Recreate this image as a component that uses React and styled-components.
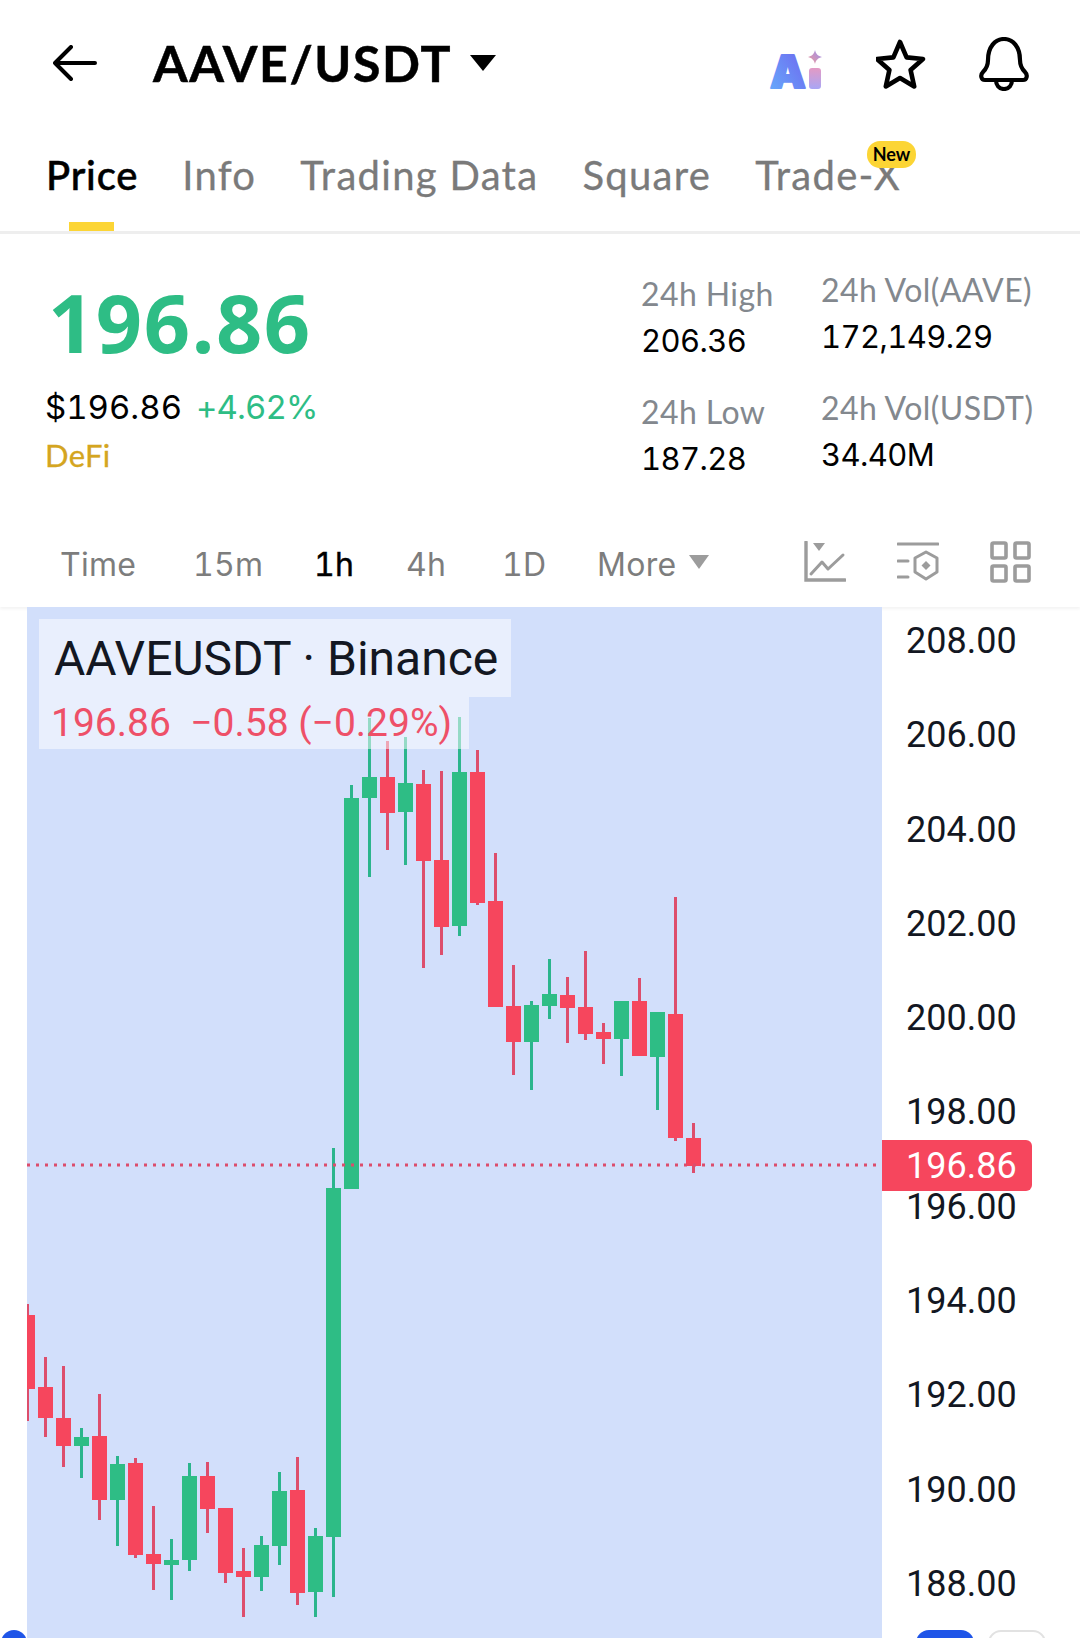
import React from "react";
import styled, { createGlobalStyle } from "styled-components";

const GlobalStyle = createGlobalStyle`
  html, body { margin: 0; padding: 0; background: #fff; }
  * { box-sizing: border-box; }
`;

const UI_FONT = `Lato, "Open Sans", sans-serif`;
const NUM_FONT = `Inter, "Open Sans", sans-serif`;

// ---------- page ----------
const Page = styled.div`
  width: 1080px;
  height: 1638px;
  overflow: hidden;
  background: #fff;
  font-family: ${UI_FONT};
  color: #000;
`;

// ---------- top bar ----------
const TopBar = styled.div`
  height: 125px;
  padding: 39px 51px 0 53px;
  display: flex;
  align-items: flex-start;
`;

const BackButton = styled.div`
  width: 44px;
  height: 44px;
  margin-top: 6px;
  margin-right: 56px;
`;

const Title = styled.div`
  font-size: 50px;
  font-weight: 700;
  line-height: 50px;
  margin-top: -1px;
  letter-spacing: 1.6px;
  -webkit-text-stroke: 0.5px #000;
`;

const Caret = styled.div`
  width: 0;
  height: 0;
  margin-left: ${p => p.$left}px;
  margin-top: ${p => p.$top || 0}px;
  border-left: ${p => p.$size}px solid transparent;
  border-right: ${p => p.$size}px solid transparent;
  border-top: ${p => p.$h}px solid ${p => p.$color};
`;

const IconGroup = styled.div`
  margin-left: auto;
  display: flex;
  align-items: flex-start;
  gap: 53px;
`;

// ---------- tabs ----------
const Tabs = styled.div`
  height: 109px;
  padding: 26px 0 0 46px;
  display: flex;
  gap: 44px;
  border-bottom: 3px solid #eeeeee;
`;

const Tab = styled.div`
  position: relative;
  height: 80px;
  font-size: 40px;
  line-height: 48px;
  letter-spacing: ${p => (p.$active ? 0.8 : 1.3)}px;
  font-weight: ${p => (p.$active ? 500 : 400)};
  color: ${p => (p.$active ? "#000" : "#7a7a7a")};
  -webkit-text-stroke: ${p => (p.$active ? "0.5px #000" : "0.3px #7a7a7a")};
  ${p =>
    p.$active &&
    `&::after {
      content: "";
      position: absolute;
      left: 23px;
      bottom: 0;
      width: 45px;
      height: 9px;
      background: #fcd535;
    }`}
`;

const NewBadge = styled.span`
  position: absolute;
  right: -15px;
  top: -10px;
  width: 49px;
  height: 27px;
  border-radius: 13px;
  background: #fcd535;
  color: #000;
  font-size: 18px;
  line-height: 27px;
  letter-spacing: 0;
  font-weight: 700;
  text-align: center;
  -webkit-text-stroke: 0;
`;

// ---------- stats ----------
const Stats = styled.div`
  height: 307px;
  padding-left: 45px;
  display: flex;
`;

const PriceBlock = styled.div`
  width: 596px;
  padding-top: 47px;
`;

const BigPrice = styled.div`
  font-family: "Open Sans", sans-serif;
  font-size: 81px;
  line-height: 81px;
  font-weight: 700;
  letter-spacing: 1.5px;
  color: #2ebd85;
  margin-left: 3px;
`;

const PriceRow = styled.div`
  display: flex;
  gap: 14px;
  margin-top: 25px;
  font-family: ${NUM_FONT};
  font-variant-numeric: tabular-nums;
  font-size: 33px;
  line-height: 40px;
`;

const Fiat = styled.span`
  color: #000;
`;

const Change = styled.span`
  color: #2ebd85;
  letter-spacing: -0.9px;
`;

const Sector = styled.div`
  margin-top: 9px;
  font-size: 31px;
  line-height: 38px;
  letter-spacing: 0.3px;
  color: #d4a520;
  -webkit-text-stroke: 0.3px #d4a520;
`;

const StatColumn = styled.div`
  width: ${p => p.$width}px;
  padding-top: ${p => p.$top}px;
  display: flex;
  flex-direction: column;
  gap: 34px;
`;

const StatItem = styled.div`
  display: flex;
  flex-direction: column;
  gap: 10px;
`;

const StatLabel = styled.div`
  font-size: 32px;
  line-height: 37px;
  letter-spacing: 0.4px;
  color: #83888e;
`;

const StatValue = styled.div`
  font-family: ${NUM_FONT};
  font-variant-numeric: tabular-nums;
  font-size: 31px;
  line-height: 37px;
  letter-spacing: -0.6px;
  color: #000;
`;

// ---------- interval bar ----------
const IntervalBar = styled.div`
  height: 66px;
  position: relative;
  display: flex;
  align-items: flex-start;
  padding-left: 60px;
  box-shadow: 0 2px 3px rgba(0, 0, 0, 0.05);
`;

const Interval = styled.div`
  width: ${p => p.$width}px;
  font-family: ${NUM_FONT};
  font-variant-numeric: tabular-nums;
  font-size: 32px;
  line-height: 40px;
  letter-spacing: 0.3px;
  margin-top: 4px;
  color: ${p => (p.$active ? "#000" : "#7d7d7d")};
  -webkit-text-stroke: ${p => (p.$active ? "0.4px #000" : "0")};
`;

const ToolIcons = styled.div`
  margin-left: auto;
  margin-right: 49px;
  display: flex;
  gap: 51px;
`;

// ---------- chart ----------
const ChartRow = styled.div`
  display: flex;
  height: 1031px;
`;

const Gutter = styled.div`
  width: 27px;
  flex: none;
  display: flex;
  align-items: flex-end;
`;

const BlueDot = styled.div`
  width: 26px;
  height: 26px;
  flex: none;
  margin-left: 1px;
  margin-bottom: -18px;
  border-radius: 50%;
  background: #1f55e8;
`;

const Plot = styled.div`
  position: relative;
  width: 855px;
  flex: none;
  background: #d2dffb;
  overflow: hidden;
`;

const PlotSvg = styled.svg`
  display: block;
  width: 855px;
  height: 1031px;
`;

const Legend = styled.div`
  position: absolute;
  left: 12px;
  top: 12px;
  display: flex;
  flex-direction: column;
  align-items: flex-start;
  font-family: Roboto, sans-serif;
`;

const LegendTitle = styled.div`
  height: 78px;
  width: 472px;
  padding: 1px 0 0 15px;
  background: rgba(255, 255, 255, 0.5);
  font-size: 48px;
  line-height: 78px;
  color: #131722;
  white-space: nowrap;
`;

const LegendValues = styled.div`
  height: 52px;
  width: 430px;
  padding-left: 12px;
  background: rgba(255, 255, 255, 0.5);
  font-size: 39px;
  line-height: 52px;
  color: #ee5068;
  white-space: pre;
`;

const Axis = styled.div`
  position: relative;
  flex: 1;
  padding: 14px 0 0 24px;
  font-family: Roboto, sans-serif;
  font-size: 36px;
  color: #131722;
  display: flex;
  flex-direction: column;
`;

const AxisLabel = styled.div`
  height: 40px;
  line-height: 40px;
  margin-bottom: 54.3px;
`;

const PriceTag = styled.div`
  position: absolute;
  left: 0;
  top: 533px;
  width: 150px;
  height: 51px;
  padding-left: 24px;
  background: #f6465d;
  border-radius: 0 6px 6px 0;
  color: #fff;
  line-height: 53px;
`;

const ToggleRow = styled.div`
  display: flex;
  gap: 14px;
  margin: -28.3px 0 0 10px;
`;

const Toggle = styled.div`
  width: 58px;
  height: 30px;
  border-radius: 13px;
  background: ${p => (p.$on ? "#1f55e8" : "#fff")};
  border: ${p => (p.$on ? "none" : "2px solid #e2e2e2")};
`;

// ---------- data ----------
const TABS = ["Price", "Info", "Trading Data", "Square"];

const INTERVALS = [
  { label: "Time", width: 133 },
  { label: "15m", width: 121 },
  { label: "1h", width: 92, active: true },
  { label: "4h", width: 96 },
  { label: "1D", width: 95 },
  { label: "More", width: 81 },
];

const STATS_A = [
  { label: "24h High", value: "206.36" },
  { label: "24h Low", value: "187.28" },
];

const STATS_B = [
  { label: "24h Vol(AAVE)", value: "172,149.29" },
  { label: "24h Vol(USDT)", value: "34.40M" },
];

const AXIS = ["208.00", "206.00", "204.00", "202.00", "200.00", "198.00", "196.00", "194.00", "192.00", "190.00", "188.00"];

// [up, wickTop, wickBottom, bodyTop, bodyBottom]
const CANDLES = [
  [0, 1304, 1421, 1315, 1389],
  [0, 1357, 1437, 1387, 1418],
  [0, 1366, 1467, 1418, 1446],
  [1, 1428, 1478, 1437, 1446],
  [0, 1394, 1520, 1436, 1500],
  [1, 1456, 1546, 1464, 1500],
  [0, 1458, 1558, 1463, 1555],
  [0, 1506, 1590, 1554, 1564],
  [1, 1539, 1600, 1560, 1565],
  [1, 1463, 1571, 1476, 1560],
  [0, 1462, 1533, 1476, 1509],
  [0, 1508, 1583, 1508, 1573],
  [0, 1548, 1617, 1571, 1577],
  [1, 1536, 1591, 1545, 1577],
  [1, 1472, 1565, 1491, 1546],
  [0, 1457, 1605, 1490, 1593],
  [1, 1528, 1617, 1536, 1592],
  [1, 1148, 1597, 1188, 1537],
  [1, 785, 1189, 798, 1189],
  [1, 718, 877, 777, 798],
  [0, 741, 850, 777, 813],
  [1, 737, 865, 783, 812],
  [0, 770, 968, 784, 861],
  [0, 771, 955, 860, 927],
  [1, 717, 936, 772, 926],
  [0, 750, 905, 772, 903],
  [0, 853, 1007, 901, 1007],
  [0, 965, 1075, 1006, 1042],
  [1, 1001, 1090, 1005, 1042],
  [1, 959, 1019, 994, 1006],
  [0, 977, 1043, 995, 1008],
  [0, 951, 1040, 1007, 1034],
  [0, 1023, 1064, 1032, 1039],
  [1, 1001, 1076, 1001, 1039],
  [0, 978, 1056, 1001, 1056],
  [1, 1012, 1110, 1012, 1057],
  [0, 897, 1141, 1014, 1138],
  [0, 1123, 1173, 1138, 1166],
];

// ---------- icons ----------
const BackIcon = () => (
  <svg width="44" height="36" viewBox="0 0 44 36" fill="none" stroke="#000" strokeWidth="4" strokeLinecap="round" strokeLinejoin="round">
    <path d="M42 18H2M18 2 2 18l16 16" />
  </svg>
);

const AiLogo = () => (
  <svg width="54" height="42" viewBox="0 0 54 42" overflow="visible" style={{ marginTop: 11 }}>
    <defs>
      <linearGradient id="aiA" x1="0" y1="1" x2="1" y2="0">
        <stop offset="0" stopColor="#66aefc" />
        <stop offset="1" stopColor="#6f62ee" />
      </linearGradient>
      <linearGradient id="aiI" x1="0" y1="0" x2="0" y2="1">
        <stop offset="0" stopColor="#e39ac4" />
        <stop offset="1" stopColor="#a9a6f5" />
      </linearGradient>
      <linearGradient id="aiS" x1="0" y1="1" x2="1" y2="0">
        <stop offset="0" stopColor="#f09a9a" />
        <stop offset="1" stopColor="#9a8ff0" />
      </linearGradient>
    </defs>
    <text x="1" y="38" fontFamily="Inter, sans-serif" fontWeight="900" fontSize="45" fill="url(#aiA)" stroke="url(#aiA)" strokeWidth="2" strokeLinejoin="round">A</text>
    <rect x="40" y="18" width="12" height="21" rx="3" fill="url(#aiI)" />
    <path d="M46 0c1 4 3 6 7 7-4 1-6 3-7 7-1-4-3-6-7-7 4-1 6-3 7-7z" fill="url(#aiS)" />
  </svg>
);

const StarIcon = () => (
  <svg width="50" height="50" viewBox="0 0 50 50" fill="none" stroke="#000" strokeWidth="4.6" strokeLinejoin="round">
    <path d="M24 3l6.6 15.4 16.4 1.6-12.4 11 3.6 16.4L24 39 9.8 47.4 13.4 31 1 20l16.4-1.6z" />
  </svg>
);

const BellIcon = () => (
  <svg width="50" height="54" viewBox="0 0 50 54" fill="none" stroke="#000" strokeWidth="4.2" strokeLinecap="round" strokeLinejoin="round" style={{ marginTop: -2 }}>
    <path d="M9 23c0-13 7-21 16-21s16 8 16 21c0 6 2 9 5 12 3 3 2 8-2 8H6c-4 0-5-5-2-8 3-3 5-6 5-12z" />
    <path d="M17 43c0 5 3 9 8 9s8-4 8-9" />
  </svg>
);

const IndicatorIcon = () => (
  <svg width="42" height="42" viewBox="0 0 42 42" fill="none" stroke="#9c9c9c" strokeWidth="3" strokeLinecap="round" strokeLinejoin="round">
    <path d="M2 1v38h39" strokeWidth="3.4" strokeLinejoin="miter" />
    <path d="M7 33l11-12 6 7 15-14" />
    <path d="M9 2h12l-6 8z" fill="#9c9c9c" stroke="none" />
  </svg>
);

const SettingsIcon = () => (
  <svg width="42" height="42" viewBox="0 0 42 42" fill="none" stroke="#9c9c9c" strokeWidth="3" strokeLinecap="round" strokeLinejoin="round">
    <path d="M1 3h40M1 20h10M1 36h10" />
    <path d="M29 11l11 6v14l-11 7-11-7V17z" />
    <path d="M29 20l4.5 4.5L29 29l-4.5-4.5z" fill="#9c9c9c" stroke="none" />
  </svg>
);

const LayoutIcon = () => (
  <svg width="41" height="42" viewBox="0 0 41 42" fill="none" stroke="#9c9c9c" strokeWidth="3.6" strokeLinejoin="round">
    <rect x="2" y="2" width="14" height="15" rx="1.5" />
    <rect x="25" y="2" width="14" height="15" rx="1.5" />
    <rect x="2" y="25" width="14" height="15" rx="1.5" />
    <rect x="25" y="25" width="14" height="15" rx="1.5" />
  </svg>
);

const Candle = ({ index, data }) => {
  const [up, wickTop, wickBottom, bodyTop, bodyBottom] = data;
  const x = 20 + index * 18;
  return (
    <g>
      <rect x={x + 6} y={wickTop} width="3" height={wickBottom - wickTop} fill={up ? "#2bb58c" : "#dd4e6c"} />
      <rect x={x} y={bodyTop} width="15" height={bodyBottom - bodyTop} fill={up ? "#2ebd85" : "#f6465d"} />
    </g>
  );
};

const App = () => (
  <Page>
    <GlobalStyle />
    <TopBar>
      <BackButton>
        <BackIcon />
      </BackButton>
      <Title>AAVE/USDT</Title>
      <Caret $left={18} $size={13} $h={16} $color="#000" $top={16} />
      <IconGroup>
        <AiLogo />
        <StarIcon />
        <BellIcon />
      </IconGroup>
    </TopBar>

    <Tabs>
      {TABS.map((t, i) => (
        <Tab key={t} $active={i === 0}>
          {t}
        </Tab>
      ))}
      <Tab>
        Trade-X
        <NewBadge>New</NewBadge>
      </Tab>
    </Tabs>

    <Stats>
      <PriceBlock>
        <BigPrice>196.86</BigPrice>
        <PriceRow>
          <Fiat>$196.86</Fiat>
          <Change>+4.62%</Change>
        </PriceRow>
        <Sector>DeFi</Sector>
      </PriceBlock>
      <StatColumn $width={180} $top={41}>
        {STATS_A.map(s => (
          <StatItem key={s.label}>
            <StatLabel>{s.label}</StatLabel>
            <StatValue>{s.value}</StatValue>
          </StatItem>
        ))}
      </StatColumn>
      <StatColumn $width={220} $top={37}>
        {STATS_B.map(s => (
          <StatItem key={s.label}>
            <StatLabel>{s.label}</StatLabel>
            <StatValue>{s.value}</StatValue>
          </StatItem>
        ))}
      </StatColumn>
    </Stats>

    <IntervalBar>
      {INTERVALS.map(it => (
        <Interval key={it.label} $width={it.width} $active={it.active}>
          {it.label}
        </Interval>
      ))}
      <Caret $left={11} $size={10} $h={14} $color="#9c9c9c" $top={14} />
      <ToolIcons>
        <IndicatorIcon />
        <SettingsIcon />
        <LayoutIcon />
      </ToolIcons>
    </IntervalBar>

    <ChartRow>
      <Gutter>
        <BlueDot />
      </Gutter>
      <Plot>
        <PlotSvg viewBox="27 607 855 1031">
          {CANDLES.map((c, i) => (
            <Candle key={i} index={i} data={c} />
          ))}
          <line x1="27" y1="1165" x2="880" y2="1165" stroke="#dc4d6c" strokeWidth="3" strokeDasharray="3 6" />
        </PlotSvg>
        <Legend>
          <LegendTitle>AAVEUSDT · Binance</LegendTitle>
          <LegendValues>{"196.86  −0.58 (−0.29%)"}</LegendValues>
        </Legend>
      </Plot>
      <Axis>
        {AXIS.map(a => (
          <AxisLabel key={a}>{a}</AxisLabel>
        ))}
        <PriceTag>196.86</PriceTag>
        <ToggleRow>
          <Toggle $on />
          <Toggle />
        </ToggleRow>
      </Axis>
    </ChartRow>
  </Page>
);

export default App;
